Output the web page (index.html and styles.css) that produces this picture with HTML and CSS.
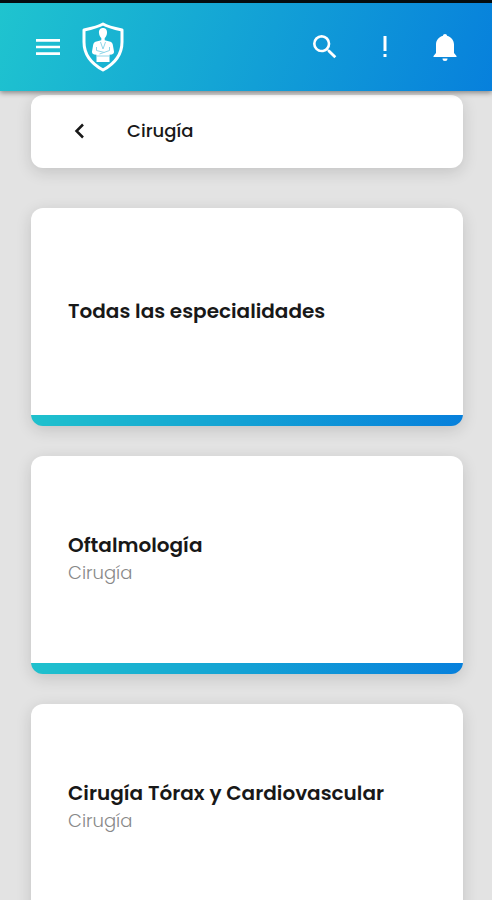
FILE: index.html
```
<!DOCTYPE html>
<html lang="es">
  <head>
    <meta charset="utf-8">
    <meta name="viewport" content="width=device-width, initial-scale=1">
    <title>Cirugía</title>
    <link rel="stylesheet" href="styles.css">
  </head>
  <body>
    <header class="topbar">
      <button class="icon-btn" type="button" aria-label="Menú">
        <svg width="32" height="32" viewBox="0 0 24 24"><path d="M3 18h18v-2H3v2zm0-5h18v-2H3v2zm0-7v2h18V6H3z"/></svg>
      </button>
      <a class="logo" href="#" aria-label="Inicio">
        <svg width="42" height="50" viewBox="0 0 42 50">
          <path class="shield" d="M21 2C16 5 9 6.500 2 8V20c0 12 7 21.500 19 28C33 41.500 40 32 40 20V8C33 6.500 26 5 21 2z"/>
          <path d="M21 6c-3 0-4.300 2.200-4 5 .2 2.300 1.200 4.200 2.300 5v2.300l-5.800 1.500c-1.300.5-2 1.500-2.300 3L10 29.500c-.2 1.500.8 2.700 2.200 3l2.300.3V40h13v-7.200l2.300-.3c1.400-.3 2.400-1.500 2.200-3l-1.200-6.700c-.3-1.500-1-2.500-2.300-3l-5.800-1.500V16c1.100-.8 2.100-2.700 2.300-5 .3-2.800-1-5-4-5z"/>
          <path class="detail" d="M18.500 20l2.500 7 2.500-7M14.500 25v3.500l8 2M27.500 25v3.500l-10 3.500M14.500 34h13"/>
        </svg>
      </a>
      <nav class="actions">
        <button class="icon-btn" type="button" aria-label="Buscar">
          <svg width="32" height="32" viewBox="0 0 24 24"><path d="M15.500 14h-.79l-.28-.27A6.471 6.471 0 0 0 16 9.500 6.500 6.500 0 1 0 9.500 16c1.610 0 3.090-.59 4.230-1.570l.27.28v.79l5 4.990L20.490 19l-4.990-5zm-6 0C7.010 14 5 11.990 5 9.500S7.010 5 9.500 5 14 7.010 14 9.500 11.990 14 9.500 14z"/></svg>
        </button>
        <button class="icon-btn" type="button" aria-label="Avisos">
          <svg width="32" height="32" viewBox="0 0 32 32"><path d="M14.500 5h3v15h-3zM14.500 23h3v3h-3z"/></svg>
        </button>
        <button class="icon-btn" type="button" aria-label="Notificaciones">
          <svg width="32" height="32" viewBox="0 0 32 32"><path d="M16 3c-1.200 0-2 .8-2 1.800C9.800 5.900 7 9.300 7 13.500V22l-2.500 3v1h23v-1L25 22v-8.500c0-4.200-2.800-7.600-7-8.700C18 3.800 17.200 3 16 3zM13.500 27.500a2.500 2.500 0 0 0 5 0z"/></svg>
        </button>
      </nav>
    </header>

    <main class="content">
      <div class="heading">
        <button class="back" type="button" aria-label="Volver">
          <svg width="24" height="24" viewBox="0 0 24 24"><path d="M16 5.500L9.500 12l6.500 6.500"/></svg>
        </button>
        <h1 class="heading-title">Cirugía</h1>
      </div>

      <a class="card" href="#">
        <h2 class="card-title">Todas las especialidades</h2>
      </a>
      <a class="card" href="#">
        <h2 class="card-title">Oftalmología</h2>
        <p class="card-subtitle">Cirugía</p>
      </a>
      <a class="card" href="#">
        <h2 class="card-title">Cirugía Tórax y Cardiovascular</h2>
        <p class="card-subtitle">Cirugía</p>
      </a>
    </main>
  </body>
</html>
```
FILE: styles.css
```
* {
  box-sizing: border-box;
}

body {
  margin: 0;
  background-color: #e3e3e3;
  color: #181818;
  font-family: Poppins, Inter, sans-serif;
}

h1, h2, p {
  margin: 0;
}

button {
  padding: 0;
  border: 0;
  background: none;
  cursor: pointer;
}

svg {
  display: block;
}

/* top bar */
.topbar {
  position: sticky;
  top: 0;
  z-index: 1;
  display: flex;
  align-items: center;
  gap: 18px;
  height: 91px;
  padding: 0 31px 0 32px;
  border-top: 3px solid #050d10;
  background: linear-gradient(110deg, #1fc4cf, #0780dc);
  box-shadow: 0 2px 5px rgba(0, 0, 0, 0.4);
}

.icon-btn svg,
.logo svg {
  fill: #fff;
}

.logo .shield {
  fill: none;
  stroke: #fff;
  stroke-width: 3;
  stroke-linejoin: round;
}

.logo .detail {
  fill: none;
  stroke: #8fd6e8;
  stroke-width: 1;
}

.actions {
  display: flex;
  gap: 28px;
  margin-left: auto;
}

/* section heading */
.content {
  display: flex;
  flex-direction: column;
  gap: 30px;
  padding: 4px 29px 30px 31px;
}

.heading,
.card {
  border-radius: 12px;
  background-color: #fff;
  box-shadow: 0 4px 16px rgba(0, 0, 0, 0.14);
}

.heading {
  display: flex;
  align-items: center;
  gap: 36px;
  height: 73px;
  margin-bottom: 10px;
  padding: 0 36px 2px;
}

.back svg {
  fill: none;
  stroke: #181818;
  stroke-width: 2.5;
}

.heading-title {
  font-size: 18px;
  font-weight: 500;
  line-height: 28px;
}

/* cards */
.card {
  display: flex;
  flex-direction: column;
  justify-content: center;
  min-height: 218px;
  padding: 0 37px 12px;
  color: inherit;
  text-decoration: none;
  background-image: linear-gradient(90deg, #1fc1cd, #0780dc);
  background-position: bottom;
  background-size: 100% 11px;
  background-repeat: no-repeat;
}

.card-title {
  font-size: 20px;
  font-weight: 600;
  line-height: 28px;
}

.card-subtitle {
  color: #888;
  font-size: 18px;
  font-weight: 300;
  line-height: 28px;
}
```
